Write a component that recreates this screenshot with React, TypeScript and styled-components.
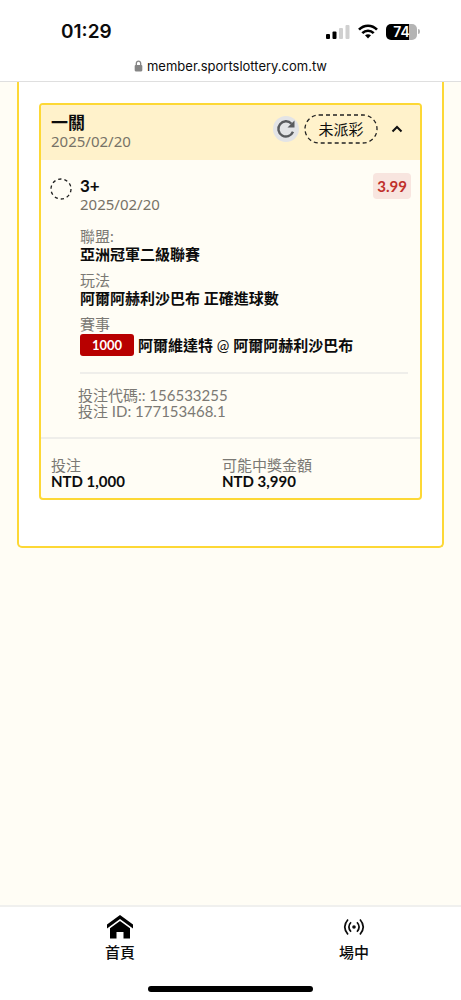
import React from "react";
import styled, { createGlobalStyle } from "styled-components";

const GlobalStyle = createGlobalStyle`
  *, *::before, *::after { box-sizing: border-box; }
  body {
    margin: 0;
    background: #fffdf5;
    color: #0c0c0c;
    font-family: Lato, "Noto Sans CJK TC", sans-serif;
    font-size: 15px;
  }
  button { font: inherit; color: inherit; border: 0; background: none; padding: 0; cursor: pointer; }
  p, h1, h2, dl, dd { margin: 0; font-size: inherit; }
`;

const Page = styled.div`
  min-height: 100vh;
  display: flex;
  flex-direction: column;
`;

const BrowserTop = styled.header`
  background: #fff;
  border-bottom: 1px solid #dfdfdf;
  font-family: Inter, sans-serif;
`;

const StatusBar = styled.div`
  display: flex;
  justify-content: space-between;
  align-items: center;
  height: 54px;
  padding: 9px 41px 0 61px;
`;

const Clock = styled.time`
  font-size: 19px;
  font-weight: 600;
  line-height: 24px;
`;

const StatusIcons = styled.div`
  display: flex;
  align-items: center;
  gap: 8px;
`;

const Battery = styled.div`
  display: flex;
  align-items: center;
  gap: 1px;
`;

const BatteryBody = styled.div`
  width: 31px;
  height: 16px;
  border-radius: 5px;
  background: linear-gradient(to right, #000 74%, #b4b4b4 74%);
  color: #fff;
  font-size: 14px;
  font-weight: 600;
  line-height: 16px;
  text-align: center;
`;

const BatteryTip = styled.div`
  width: 2px;
  height: 5px;
  border-radius: 0 2px 2px 0;
  background: #b4b4b4;
`;

const AddressBar = styled.div`
  display: flex;
  justify-content: center;
  align-items: center;
  gap: 4px;
  height: 27px;
  padding-bottom: 4px;
  font-size: 13px;
`;

const Main = styled.main`
  flex: 1;
  padding: 0 17px 24px;
`;

const Panel = styled.section`
  padding: 21px 20px 46px;
  background: #fff;
  border: 2px solid #fdd835;
  border-top: 0;
  border-radius: 0 0 5px 5px;
`;

const Card = styled.article`
  border: 2px solid #fdd835;
  border-radius: 4px;
  background: #fffdf5;
  overflow: hidden;
`;

const CardHead = styled.div`
  display: flex;
  justify-content: space-between;
  padding: 9px 9px 10px 10px;
  background: #fff2cb;
`;

const Title = styled.h2`
  font-size: 17px;
  font-weight: 700;
  line-height: 18px;
`;

const DateText = styled.p`
  font-family: "Noto Sans", sans-serif;
  line-height: 18px;
  color: #777267;
`;

const HeadTools = styled.div`
  display: flex;
  align-items: center;
  height: 30px;
  gap: 5px;
`;

const RefreshButton = styled.button`
  display: grid;
  place-items: center;
  width: 26px;
  height: 26px;
  border-radius: 50%;
  background: #e3e4e6;
`;

const StatusPill = styled.span`
  position: relative;
  width: 74px;
  line-height: 30px;
  text-align: center;
`;

const PillOutline = styled.svg`
  position: absolute;
  inset: 0;
  width: 100%;
  height: 100%;
`;

const ToggleButton = styled.button`
  display: grid;
  place-items: center;
  width: 28px;
  height: 28px;
`;

const Selection = styled.div`
  display: grid;
  grid-template-columns: 22px 1fr;
  column-gap: 8px;
  padding: 13px 9px 18px;
`;

const PendingMark = styled.svg`
  margin-top: 5px;
`;

const SelectionHead = styled.div`
  display: flex;
  justify-content: space-between;
  align-items: flex-start;
`;

const SelectionName = styled.div`
  padding-top: 4px;
`;

const Odds = styled.strong`
  padding: 0 4px;
  border-radius: 4px;
  background: #f8e5df;
  color: #c0302a;
  line-height: 26px;
`;

const Details = styled.dl`
  display: grid;
  gap: 8px;
  margin: 14px 3px 0 0;
  padding-bottom: 16px;
  border-bottom: 2px solid #efeeea;
`;

const Label = styled.dt`
  line-height: 18px;
  color: #7b7974;
`;

const Value = styled.dd`
  font-weight: 700;
  line-height: 18px;
`;

const MatchValue = styled(Value)`
  display: flex;
  align-items: center;
  gap: 4px;
  padding-top: 1px;
  line-height: 22px;
`;

const MatchNumber = styled.span`
  width: 54px;
  border-radius: 3px;
  background: #b80000;
  color: #fff;
  font-size: 13px;
  text-align: center;
`;

const Versus = styled.span`
  font-weight: 400;
`;

const Codes = styled.div`
  margin: 13px 0 0 -2px;
  line-height: 16px;
  color: #7b7974;
`;

const Totals = styled.dl`
  display: grid;
  grid-template-columns: 171px 1fr;
  padding: 18px 10px 9px;
  border-top: 2px solid #efeeea;

  ${Label}, ${Value} { line-height: 16px; }
`;

const TabBar = styled.nav`
  padding-bottom: 8px;
  background: #fff;
  border-top: 2px solid #f0f0ee;
`;

const Tabs = styled.div`
  display: flex;
  justify-content: space-between;
  padding: 8px 47px 0 60px;
`;

const Tab = styled.a`
  display: flex;
  flex-direction: column;
  align-items: center;
  width: 120px;
  color: #0c0c0c;
  font-weight: 500;
  line-height: 22px;
  text-decoration: none;

  svg { margin-bottom: 2px; }
`;

const HomeIndicator = styled.div`
  width: 165px;
  height: 6px;
  margin: 23px auto 0;
  border-radius: 3px;
  background: #000;
`;

const SignalIcon = () => (
  <svg width="24" height="16" viewBox="0 0 24 16" aria-hidden="true">
    <rect x="0" y="10" width="4" height="5" rx="1" />
    <rect x="6.5" y="7.5" width="4" height="7.5" rx="1" />
    <rect x="13" y="4" width="4" height="11" rx="1" fill="#d0d0d0" />
    <rect x="19.5" y="1" width="4" height="14" rx="1" fill="#d0d0d0" />
  </svg>
);

const WifiIcon = () => (
  <svg width="20" height="16" viewBox="0 0 20 16" fill="none" stroke="#000" strokeWidth="2.6" aria-hidden="true">
    <path d="M1 5.7C6 .5 14 .5 19 5.7" />
    <path d="M4.3 9.2C7.5 6 12.5 6 15.7 9.2" />
    <path d="M7 11.3Q10 9.3 13 11.3L10 14.6Z" fill="#000" stroke="none" />
  </svg>
);

const LockIcon = () => (
  <svg width="9" height="12" viewBox="0 0 8 11" aria-hidden="true">
    <path d="M2 5V3a2 2 0 0 1 4 0v2" fill="none" stroke="#858585" strokeWidth="1.2" />
    <rect x=".5" y="4.5" width="7" height="6" rx="1" fill="#858585" />
  </svg>
);

const RefreshIcon = () => (
  <svg width="20" height="20" viewBox="0 0 20 20" fill="none" aria-hidden="true">
    <path d="M17 12.8A7.6 7.6 0 1 1 15.5 4.7" stroke="#595b5e" strokeWidth="2.4" />
    <path d="M18.5 1.5V8.5H11.5Z" fill="#595b5e" />
  </svg>
);

const ChevronUpIcon = () => (
  <svg width="12" height="8" viewBox="0 0 12 8" fill="none" aria-hidden="true">
    <path d="M1.5 6.5L6 2L10.5 6.5" stroke="#111" strokeWidth="2" />
  </svg>
);

const HomeIcon = () => (
  <svg width="28" height="24" viewBox="0 0 28 24" aria-hidden="true">
    <path d="M14 0L27 9.5V13.5L14 4L1 13.5V9.5Z" />
    <path d="M14 6L24 13.3V23.5H17.5V17H10.5V23.5H4V13.3Z" />
  </svg>
);

const LiveIcon = () => (
  <svg width="22" height="24" viewBox="0 0 22 24" fill="none" stroke="#0c0c0c" strokeWidth="1.7" aria-hidden="true">
    <circle cx="11" cy="12" r="1.8" fill="#0c0c0c" stroke="none" />
    <path d="M5 4.5Q-1.5 12 5 19.5M17 4.5Q23.5 12 17 19.5" />
    <path d="M8 7.3Q3.8 12 8 16.7M14 7.3Q18.2 12 14 16.7" />
  </svg>
);

export default function App() {
  return (
    <Page>
      <GlobalStyle />
      <BrowserTop>
        <StatusBar>
          <Clock>01:29</Clock>
          <StatusIcons>
            <SignalIcon />
            <WifiIcon />
            <Battery>
              <BatteryBody>74</BatteryBody>
              <BatteryTip />
            </Battery>
          </StatusIcons>
        </StatusBar>
        <AddressBar>
          <LockIcon />
          <span>member.sportslottery.com.tw</span>
        </AddressBar>
      </BrowserTop>

      <Main>
        <Panel>
          <Card>
            <CardHead>
              <div>
                <Title>一關</Title>
                <DateText>2025/02/20</DateText>
              </div>
              <HeadTools>
                <RefreshButton type="button" aria-label="重新整理">
                  <RefreshIcon />
                </RefreshButton>
                <StatusPill>
                  <PillOutline aria-hidden="true">
                    <rect x="1" y="1" width="72" height="28" rx="14" fill="none" stroke="#222" strokeWidth="1.3" strokeDasharray="4 3" />
                  </PillOutline>
                  未派彩
                </StatusPill>
                <ToggleButton type="button" aria-label="收合">
                  <ChevronUpIcon />
                </ToggleButton>
              </HeadTools>
            </CardHead>

            <Selection>
              <PendingMark width="22" height="22" viewBox="0 0 22 22" aria-hidden="true">
                <circle cx="11" cy="11" r="10" fill="none" stroke="#222" strokeWidth="1.3" strokeDasharray="3.3 2.98" />
              </PendingMark>
              <div>
                <SelectionHead>
                  <SelectionName>
                    <Title as="p">3+</Title>
                    <DateText>2025/02/20</DateText>
                  </SelectionName>
                  <Odds>3.99</Odds>
                </SelectionHead>
                <Details>
                  <div>
                    <Label>聯盟:</Label>
                    <Value>亞洲冠軍二級聯賽</Value>
                  </div>
                  <div>
                    <Label>玩法</Label>
                    <Value>阿爾阿赫利沙巴布 正確進球數</Value>
                  </div>
                  <div>
                    <Label>賽事</Label>
                    <MatchValue>
                      <MatchNumber>1000</MatchNumber>
                      <span>
                        阿爾維達特<Versus> @ </Versus>阿爾阿赫利沙巴布
                      </span>
                    </MatchValue>
                  </div>
                </Details>
                <Codes>
                  <p>投注代碼:: 156533255</p>
                  <p>投注 ID: 177153468.1</p>
                </Codes>
              </div>
            </Selection>

            <Totals>
              <div>
                <Label>投注</Label>
                <Value>NTD 1,000</Value>
              </div>
              <div>
                <Label>可能中獎金額</Label>
                <Value>NTD 3,990</Value>
              </div>
            </Totals>
          </Card>
        </Panel>
      </Main>

      <TabBar>
        <Tabs>
          <Tab href="#home">
            <HomeIcon />
            首頁
          </Tab>
          <Tab href="#live">
            <LiveIcon />
            場中
          </Tab>
        </Tabs>
        <HomeIndicator />
      </TabBar>
    </Page>
  );
}
